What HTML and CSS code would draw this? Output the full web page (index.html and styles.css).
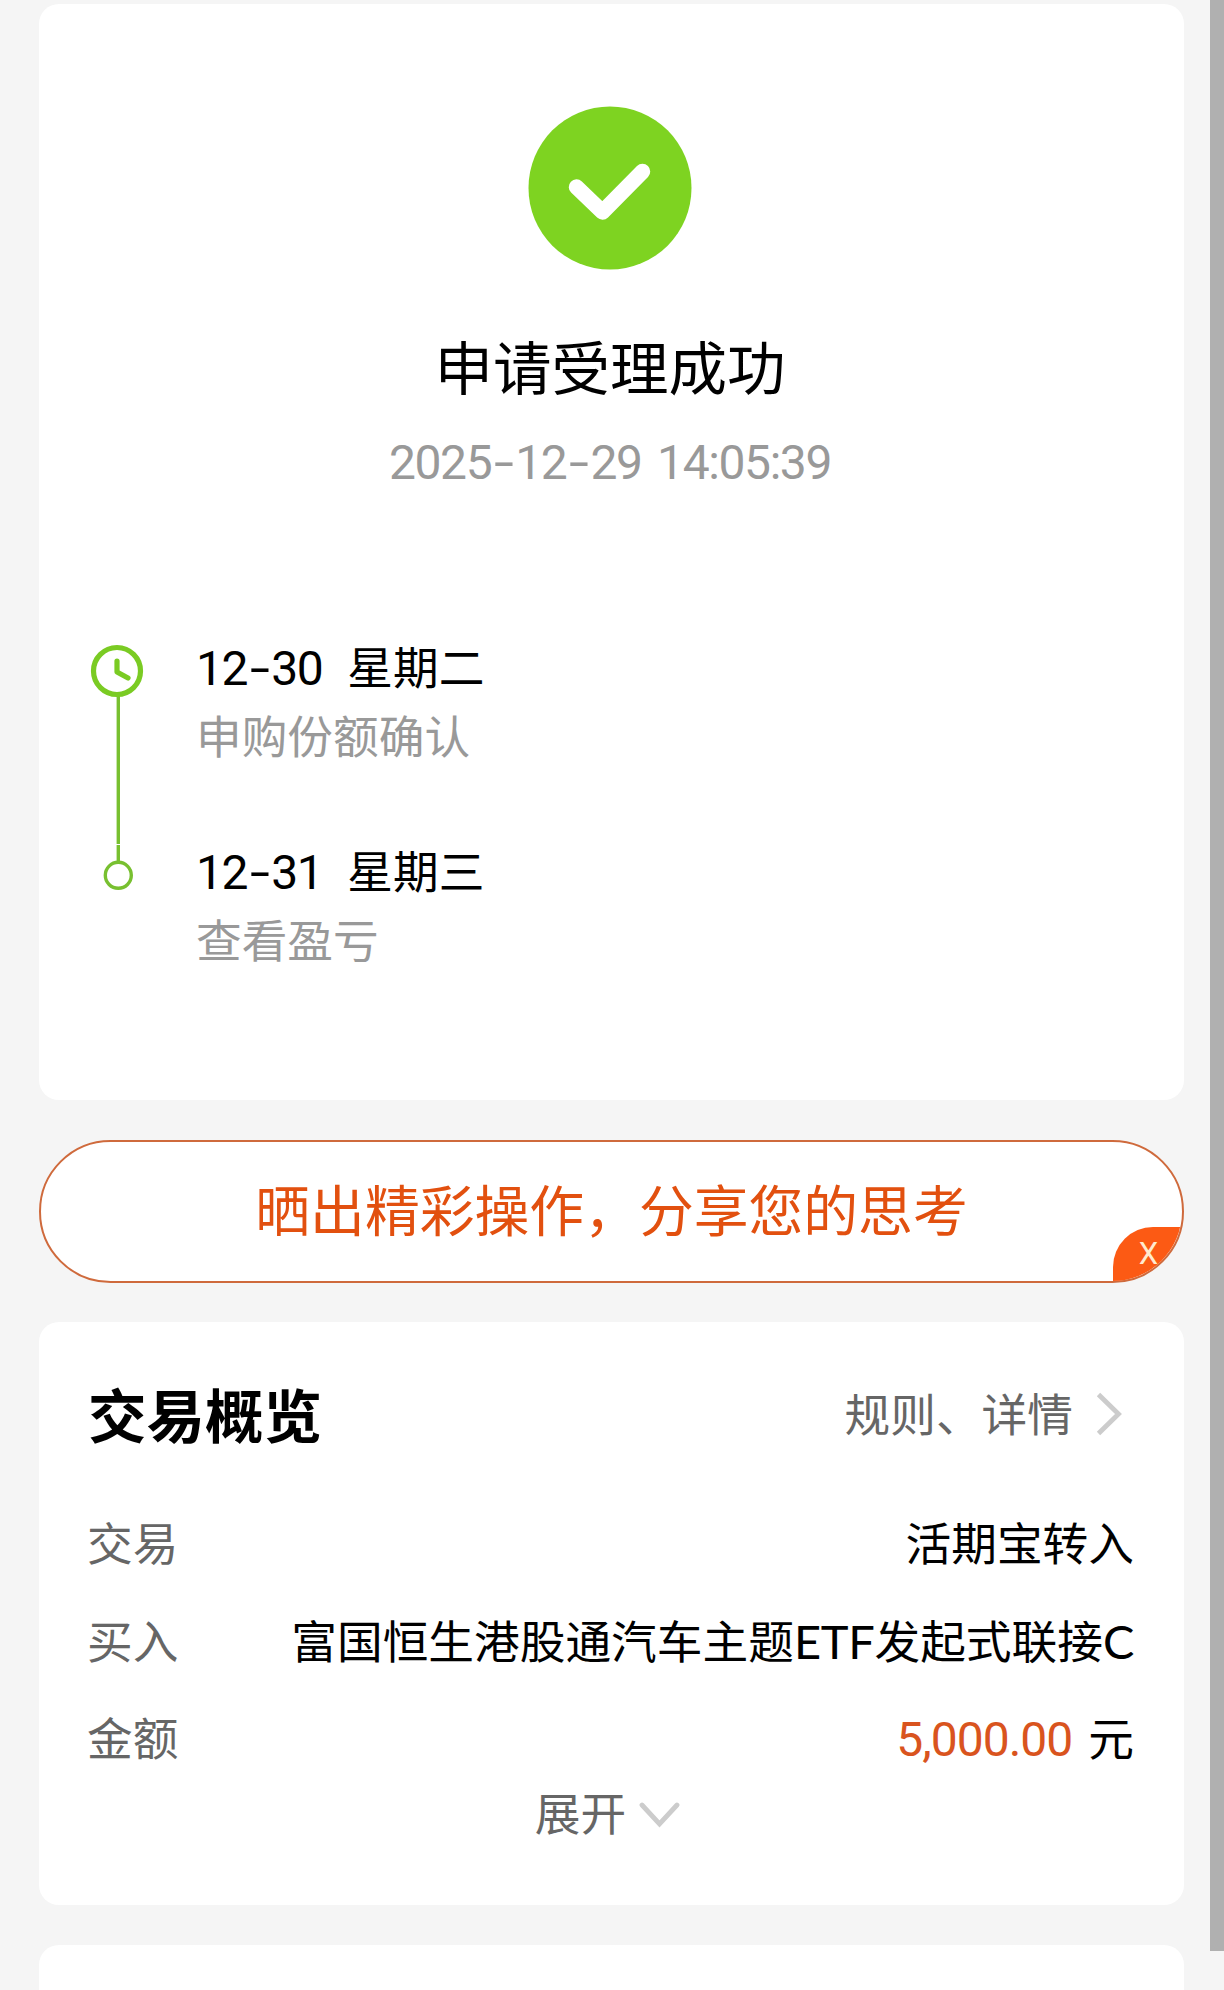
FILE: index.html
```
<!DOCTYPE html>
<html lang="zh-CN">
<head>
  <meta charset="UTF-8">
  <title>申请受理成功</title>
  <link rel="stylesheet" href="styles.css">
</head>
<body>
  <main class="page">
    <section class="card result">
      <svg class="success" viewBox="0 0 164 164">
        <circle cx="82" cy="82" r="81.5" fill="#7ed321"/>
        <path d="M48.5 81 L74.5 106 L114.5 65.5" fill="none" stroke="#fff" stroke-width="15.5" stroke-linecap="round" stroke-linejoin="round"/>
      </svg>
      <h1>申请受理成功</h1>
      <p class="time num">2025<i>-</i>12<i>-</i>29 14:05:39</p>

      <div class="timeline">
        <svg class="track" viewBox="0 0 56 250">
          <path d="M29.3 54 V202 M29.3 203 V219" stroke="#78c030" stroke-width="3.4"/>
          <circle cx="28" cy="29" r="23.5" fill="none" stroke="#7acb23" stroke-width="5.2"/>
          <path d="M28 19 V30 L39 36" fill="none" stroke="#7acb23" stroke-width="5.2" stroke-linecap="round" stroke-linejoin="round"/>
          <circle cx="29.3" cy="233.3" r="13" fill="#fff" stroke="#78c030" stroke-width="3.4"/>
        </svg>
        <div class="steps">
          <div class="step">
            <p class="date"><span class="num">12<i>-</i>30</span><span>星期二</span></p>
            <p class="desc">申购份额确认</p>
          </div>
          <div class="step">
            <p class="date"><span class="num">12<i>-</i>31</span><span>星期三</span></p>
            <p class="desc">查看盈亏</p>
          </div>
        </div>
      </div>
    </section>

    <div class="share">
      晒出精彩操作，分享您的思考
      <span class="close">X</span>
    </div>

    <section class="card overview">
      <div class="head">
        <h2>交易概览</h2>
        <a class="more">规则、详情
          <svg width="28" height="48" viewBox="0 0 28 48"><path d="M2.5 6.5 L22.5 26 L2.5 45.5" fill="none" stroke="#ccc" stroke-width="4.8"/></svg>
        </a>
      </div>
      <div class="row"><span class="label">交易</span><span>活期宝转入</span></div>
      <div class="row"><span class="label">买入</span><span>富国恒生港股通汽车主题<b class="latin">ETF</b>发起式联接<b class="latin">C</b></span></div>
      <div class="row"><span class="label">金额</span><span class="amount"><em class="num">5,000.00</em><span>元</span></span></div>
      <div class="expand">展开
        <svg width="42" height="34" viewBox="0 0 42 34"><path d="M3 11 L20.5 30 L38 11" fill="none" stroke="#ccc" stroke-width="4.8" stroke-linecap="round"/></svg>
      </div>
    </section>

    <section class="card next"></section>
  </main>
  <div class="scrollbar"></div>
</body>
</html>
```
FILE: styles.css
```
* {
  box-sizing: border-box;
}

body {
  margin: 0;
  height: 1990px;
  overflow: hidden;
  background: #f5f5f5;
  color: #000;
  font-family: "Noto Sans CJK SC", sans-serif;
  font-size: 45.7px;
}

h1, h2, p {
  margin: 0;
  font-weight: normal;
}

.page {
  padding: 4px 40px 0 39px;
}

.card {
  background: #fff;
  border-radius: 20px;
}

/* digits */
.num {
  font-family: Roboto, "Noto Sans CJK SC", sans-serif;
  font-size: 48px;
  letter-spacing: -1.4px;
  font-style: normal;
}

.num i {
  display: inline-block;
  width: 24px;
  text-align: center;
  font-style: normal;
  transform: scaleX(1.5);
}

.result {
  height: 1096px;
  padding: 102px 3px 0 0;
  display: flex;
  flex-direction: column;
  align-items: center;
}

.success {
  width: 164px;
  height: 164px;
}

h1 {
  margin-top: 55px;
  font-size: 58.5px;
  line-height: 80px;
}

.time {
  margin-top: 28px;
  line-height: 60px;
  color: #999;
  word-spacing: 5px;
}

.timeline {
  align-self: stretch;
  display: flex;
  gap: 51px;
  margin-top: 149px;
  padding-left: 50px;
}

.track {
  width: 56px;
  height: 250px;
}

.steps {
  margin-top: -11px;
}

.step {
  height: 204px;
}

.date {
  display: flex;
  gap: 25px;
  align-items: baseline;
  height: 69px;
  line-height: 68px;
}

.desc {
  line-height: 68px;
  color: #999;
}

.share {
  position: relative;
  height: 143px;
  margin: 40px 0 39px;
  border: 2px solid #cf6a3c;
  border-radius: 72px;
  overflow: hidden;
  background: #fff;
  color: #e2500f;
  font-size: 54.8px;
  line-height: 130px;
  text-align: center;
}

.close {
  position: absolute;
  right: -2px;
  bottom: 0;
  width: 71px;
  height: 54px;
  border-top-left-radius: 40px;
  background: #fc5a14;
  color: #ffeace;
  font-family: Roboto, sans-serif;
  font-size: 31px;
  line-height: 53px;
}

.overview {
  height: 583px;
  padding: 42px 50px 0 49px;
}

.head {
  display: flex;
  justify-content: space-between;
  align-items: center;
  height: 96px;
  margin-bottom: 33px;
}

h2 {
  font-size: 58.5px;
  font-weight: bold;
}

.more {
  display: flex;
  align-items: center;
  gap: 23px;
  padding-right: 10px;
  color: #666;
}

.row {
  display: flex;
  justify-content: space-between;
  height: 97.5px;
  line-height: 97.5px;
}

.label {
  margin-left: -1px;
  color: #666;
}

.latin {
  font-family: Lato, sans-serif;
  font-size: 47px;
  font-weight: normal;
  letter-spacing: -0.3px;
}

.amount {
  display: flex;
  align-items: baseline;
  gap: 16px;
}

.amount .num {
  color: #d9541e;
  letter-spacing: -1px;
}

.expand {
  display: flex;
  justify-content: center;
  align-items: center;
  gap: 13px;
  height: 51px;
  padding-right: 6px;
  color: #666;
}

.next {
  height: 100px;
  margin-top: 40px;
}

.scrollbar {
  position: absolute;
  top: 0;
  right: 0;
  width: 14px;
  height: 1951px;
  background: #b0b0b0;
}
```
